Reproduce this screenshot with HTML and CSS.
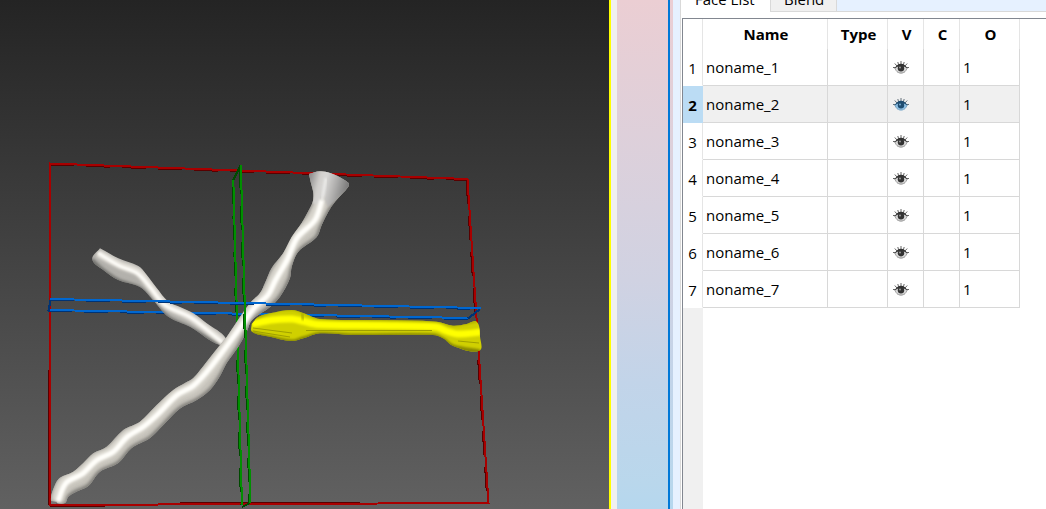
FILE: index.html
```html
<!DOCTYPE html>
<html lang="en">
<head>
<meta charset="utf-8">
<title>Face List</title>
<link rel="stylesheet" href="styles.css">
</head>
<body>
<div class="app">
  <div class="viewport">
    <svg class="scene" width="609" height="509" viewBox="0 0 609 509">
      <defs>
        <filter id="soft" x="-10%" y="-10%" width="120%" height="120%"><feGaussianBlur stdDeviation="1.5"/></filter>
        <filter id="softer" x="-10%" y="-10%" width="120%" height="120%"><feGaussianBlur stdDeviation="2.4"/></filter>
        <filter id="fine" x="-10%" y="-30%" width="120%" height="160%"><feGaussianBlur stdDeviation="0.8"/></filter>
        <path id="trunk" class="smooth" d="M309 174L310.7 182L313.3 193L312.7 202L307.3 213L301.7 223L291.7 237L283.3 253L271.7 268L265 283L260 293L250 303L240 317L226.7 337L221.7 343L206.7 361.7L193.3 378L185 383L173.3 390L156.7 405L140 421.7L123.3 430L106.7 446.7L93.3 453.3L83.3 463L73.3 471.7L60 477.7L55 485L51 500L56.7 503L65 503L68.3 496.7L76.7 491.5L88.3 486L100 471.7L118.3 463L131.7 448L150 438L163.3 425L180 408.5L196.7 400L210 390L220 376L226.7 363L238.3 346.7L246.7 331.7L252 320L270 307L280 296.7L290 278L291.7 266.7L298.3 251.7L316.7 237L321.7 225L328.3 211.7L335 201.7L348.3 186.7L348.3 182.7L336.7 175.7L330 173L320 171.3L309 174"/>
        <path id="branch" class="smooth" d="M100 248.3L118.3 258.3L138.3 266L146 274L156.7 288L168.3 301.7L180 307L193.3 313.3L206.7 323.3L226 338.5L220 345L190 326.7L168.3 316.7L153 300L140 287L118.3 280L103.3 270L92.3 259.3L100 248.3"/>
        <path id="active" class="smooth" d="M251.7 324L258 317.3L270 313.3L291.7 310L303 313L320 319L380 320L436.7 321.7L453 325.7L466.7 324L476.7 321.7L480 336.7L479.3 350.7L453.3 346L443 338.3L433 335L353 335L320 333.3L303.3 338.3L291.7 341L270 336.7L252 331.7L251.7 324"/>
        <clipPath id="trunkClip"><use href="#trunk"/></clipPath>
        <clipPath id="branchClip"><use href="#branch"/></clipPath>
        <clipPath id="activeClip"><use href="#active"/></clipPath>
        <linearGradient id="flare" x1="309" y1="180" x2="348" y2="190" gradientUnits="userSpaceOnUse">
          <stop offset="0" stop-color="#8e8e8e"/><stop offset=".25" stop-color="#d2d0cd"/><stop offset=".4" stop-color="#d8d7d5"/><stop offset=".65" stop-color="#b2b1b0"/><stop offset="1" stop-color="#777"/>
        </linearGradient>
      </defs>

      <g class="wire">
        <path class="shade red" d="M50 164.500L467.500 180"/>
        <path class="shade red" d="M466.500 180L487.500 503"/>
        <path class="shade-line red" d="M48.500 370V505M50 506.500H105M180 503H360"/>
        <path class="line red" d="M50 163.500L467.500 179L488.500 503L50 505Z"/>
        <path class="shade blue" d="M48 311L468 319"/>
        <path class="line blue" d="M48 310L468 318"/>
        <path class="shade-line blue wide" d="M50.500 300L48.500 311M480 309L468 318.500"/>
        <path class="shade green" d="M232.500 180L241 505"/>
        <path class="line green" d="M233.300 179L242 505"/>
        <path class="shade-line green wide" d="M233 180L240.500 166M242 507L250 503"/>
      </g>

      <use href="#branch" fill="#b3b1ac"/>
      <g clip-path="url(#branchClip)" fill="none">
        <path class="smooth" filter="url(#soft)" stroke="#6f6f6c" stroke-width="5" d="M91 260L103 271L118 281L140 289L153 303L168 318L190 329L219 346"/>
        <path class="smooth" filter="url(#soft)" stroke="#e2dfd8" stroke-width="8" d="M98 253L120 265L138 272L150 286L165 304L190 317L224 342"/>
        <path class="smooth" filter="url(#fine)" stroke="#fffefa" stroke-width="3" d="M98 253L120 266L137 273L150 287L165 305L190 317L222 342"/>
      </g>

      <use href="#trunk" fill="#c5c2ba"/>
      <g clip-path="url(#trunkClip)" fill="none" stroke-linejoin="round">
        <use href="#trunk" filter="url(#soft)" stroke="#8b8984" stroke-width="3"/>
        <path class="smooth" filter="url(#softer)" stroke="#777671" stroke-width="5" d="M68 500L77 493L89 488L101 474L119 465L133 450L151 440L181 410L198 402L212 391L222 377L240 347L253 321L271 308L282 297L292 278L294 266L300 252L318 239L323 225L336 202"/>
        <path class="smooth" filter="url(#softer)" stroke="#dedbd3" stroke-width="11" d="M322 200L314 219L296 237L286 259L274 281L266 295L254 306L236 331L209 368L193 386L176 394L156 414L142 426L126 436L112 451L96 459L81 473L64 482L56 502"/>
        <path fill="url(#flare)" filter="url(#fine)" d="M307 170H350V187L334 202L328 207L323 195L318 205L312 203L313 193Z"/>
        <path class="smooth" filter="url(#fine)" stroke="#fffefa" stroke-width="5" d="M322 200L315 220L297 238L287 260L275 281L268 295L255 307L237 332L210 368L193 386L177 395L157 415L143 427L127 437L113 452L97 460L82 474L66 483L58 501"/>
        <path filter="url(#fine)" stroke="#efefed" stroke-width="3" opacity=".8" d="M326 178L322 201"/>
      </g>
      <path d="M51 501L57 502L56 504H51Z" fill="#777"/>

      <use href="#active" fill="#d0d000"/>
      <g clip-path="url(#activeClip)" fill="none">
        <path class="smooth" filter="url(#fine)" stroke="#8a8a00" stroke-width="5" d="M251 334L270 338L292 342L303 339L320 334.500L353 336L433 336L443 340L453 347L480 352"/>
        <path class="smooth" filter="url(#fine)" stroke="#b0b000" stroke-width="3" d="M251 322L270 312L292 309L303 312L320 318L437 321L453 325L477 321"/>
        <path class="smooth" filter="url(#fine)" stroke="#ff0" stroke-width="7" d="M252 324L272 320L292 319L302 321L318 324.500L380 325.500L436 327L446 331L458 334L482 332"/>
        <path class="smooth" filter="url(#fine)" stroke="#acac00" stroke-width="2.500" d="M302 313L303 320L299 330L295 336M434 328L442 333L450 339L462 343L480 344"/>
        <path stroke="#a0a000" stroke-width="1" d="M253 328L292 333M253 331L290 337M306 330.500H432M458 341L479 343"/>
      </g>

      <g class="wire">
        <path class="shade blue" d="M50 300L481 309"/>
        <path class="line blue" d="M50 299L481 308"/>
        <path class="shade green" d="M240 170L249.500 503"/>
        <path class="line green" d="M240.800 165L250.500 503"/>
      </g>
    </svg>
  </div>
  <div class="splitter"></div>
  <div class="legend"><div class="legend-mark"></div></div>
  <div class="gutter"></div>
  <div class="panel">
    <div class="tabs">
      <div class="tab tab-current"><span>Face List</span></div>
      <div class="tab tab-other"><span>Blend</span></div>
      <div class="tab-space"></div>
    </div>
    <div class="list">
      <div class="row head"><b></b><b>Name</b><b>Type</b><b>V</b><b>C</b><b>O</b></div>
      <div class="rows" id="rows"></div>
      <div class="header-rest"></div>
    </div>
  </div>
</div>
<template id="row">
  <div class="row">
    <span class="index"></span><span class="name"></span><span></span>
    <span class="visible"><svg class="eye" width="16" height="14" viewBox="0 0 16 14">
      <path class="lash" d="M1.800 2.500L4 5M4.800 1L5.700 4M8 0V3.500M11.200 1L10.300 4M14.200 2.500L12 5M0 6.500H3M13 6.500H16"/>
      <path class="white" d="M1.800 7Q8 .8 14.200 7Q12.500 12 8 12T1.800 7Z"/>
      <path class="lid" d="M1.500 7.500Q4 2.800 8 2.800T14.500 7.500Q12 5.300 8 5.300T1.500 7.500Z"/>
      <circle class="iris" cx="8" cy="7.200" r="3.200"/>
      <circle class="glint" cx="7" cy="6.500" r="1"/>
      <path class="under" d="M4 11Q8 14 12 11"/>
    </svg></span>
    <span></span><span class="opacity">1</span>
  </div>
</template>
<script src="app.js"></script>
</body>
</html>
```
FILE: styles.css
```css
* { box-sizing: border-box; }
body { margin: 0; background: #fff; color: #000; font: 15px/20px "Open Sans", "Noto Sans", sans-serif; }
.app { display: flex; width: 1046px; height: 509px; overflow: hidden; }
.viewport { flex: 0 0 609px; background: linear-gradient(#242424, #616161); }
.scene { display: block; }
.wire { fill: none; shape-rendering: crispEdges; }
.line { stroke-width: 2; }
.line.red { stroke: #a80000; }
.line.blue { stroke: #0067d0; }
.line.green { stroke: #009000; }
.shade { stroke-width: 2; stroke-dasharray: 24 12; }
.shade-line { stroke-width: 1.2; }
.shade-line.wide { stroke-width: 2.2; }
.shade.red, .shade-line.red { stroke: #580000; }
.shade.blue, .shade-line.blue { stroke: #003374; }
.shade.green, .shade-line.green { stroke: #004a00; }
.splitter { flex: 0 0 8px; background: #f0f0f0; border-left: 2px solid #ff0; }
.legend { flex: 0 0 56px; padding-left: 51px; background: linear-gradient(#ebced3, #d0d2e2 55%, #c2d4e9 75%, #b9d7ec 95%, #b5d7ee); }
.legend-mark { width: 2px; height: 509px; background: #0078d7; }
.gutter { flex: 0 0 8px; background: #e6f1ff; border-right: 1px solid #d9d9d9; }
.panel { flex: 1; display: flex; flex-direction: column; min-width: 0; }
.tabs { flex: 0 0 18px; display: flex; align-items: flex-start; }
.tab { height: 12px; overflow: hidden; }
.tab span { display: block; margin-top: -11px; }
.tab-current { width: 89px; padding-left: 14px; }
.tab-other { width: 67px; padding-left: 13px; background: #f0f0f0; border: solid #d9d9d9; border-width: 0 1px 1px; }
.tab-space { flex: 1; height: 12px; background: #e6f1ff; border-bottom: 1px solid #d9d9d9; }
.list { flex: 1; display: flex; flex-direction: column; margin-left: 1px; border: solid #828790; border-width: 1px 0 0 1px; }
.row { display: grid; grid-template-columns: 20px 125px 60px 36px 36px 60px; width: 337px; height: 37px; }
.row > * { border-right: 1px solid #d8d8d8; border-bottom: 1px solid #d8d8d8; padding: 8px 0 0 3px; }
.head { height: 30px; }
.head > * { border-bottom: 0; border-color: #e5e5e5; padding: 5px 0 0 2px; text-align: center; font-weight: 700; }
.row > .index { border-bottom-color: transparent; border-right-color: #e5e5e5; padding: 9px 0 0; text-align: center; }
.row > .visible { padding: 12px 0 0 5px; }
.selected { background: #f0f0f0; }
.row.selected > .index { background: #bbdcf4; border-color: #bbdcf4; font-weight: 700; }
.header-rest { flex: 1; width: 20px; background: #f0f0f0; }
.eye { display: block; fill: none; }
.lash { stroke: #555; stroke-width: .9; }
.white { fill: #d8d8d8; stroke: #777; stroke-width: .6; }
.lid, .iris { fill: #333; }
.glint { fill: #999; }
.under { stroke: #aaa; stroke-width: .7; }
.selected .lash { stroke: #55636e; }
.selected .white { fill: #8fc0e4; stroke: #4d83a8; }
.selected .lid, .selected .iris { fill: #1e4c70; }
.selected .glint { fill: #78acd1; }
.selected .under { stroke: #9cc0da; }
```
FILE: app.js
```js
// Rounds a polyline into a Catmull-Rom spline through the same points.
function smooth(path) {
  const pts = path.getAttribute("d").slice(1).split("L").map(p => p.trim().split(" ").map(Number));
  const last = pts.length - 1;
  let d = "M" + pts[0].join(" ");
  for (let i = 0; i < last; i++) {
    const a = pts[Math.max(i - 1, 0)], b = pts[i], c = pts[i + 1], e = pts[Math.min(i + 2, last)];
    const span = Math.hypot(c[0] - b[0], c[1] - b[1]);
    const before = Math.hypot(c[0] - a[0], c[1] - a[1]) || 1;
    const after = Math.hypot(e[0] - b[0], e[1] - b[1]) || 1;
    const k = span / 3;
    d += "C" + [b[0] + (c[0] - a[0]) / before * k, b[1] + (c[1] - a[1]) / before * k,
      c[0] - (e[0] - b[0]) / after * k, c[1] - (e[1] - b[1]) / after * k, c[0], c[1]].join(" ");
  }
  path.setAttribute("d", d);
}
document.querySelectorAll("path.smooth").forEach(smooth);

const rows = document.getElementById("rows");
const template = document.getElementById("row");
for (let i = 1; i <= 7; i++) {
  const row = template.content.cloneNode(true);
  row.querySelector(".index").textContent = i;
  row.querySelector(".name").textContent = "noname_" + i;
  if (i === 2) row.querySelector(".row").classList.add("selected");
  rows.appendChild(row);
}
```
